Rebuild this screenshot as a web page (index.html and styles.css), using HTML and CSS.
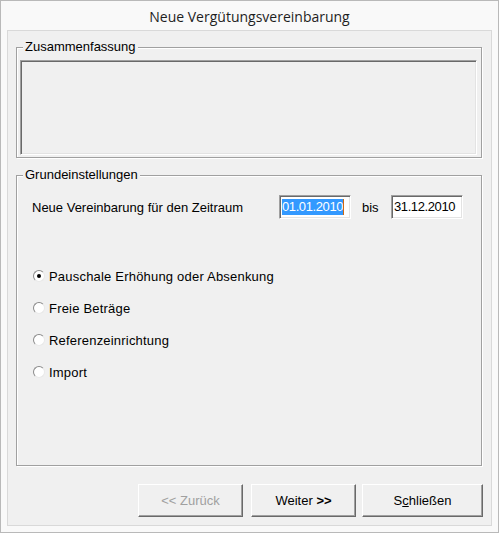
FILE: index.html
```html
<!DOCTYPE html>
<html lang="de">
<head>
<meta charset="utf-8">
<title>Neue Vergütungsvereinbarung</title>
<link rel="stylesheet" href="styles.css">
</head>
<body>
<div class="window">
  <div class="titlebar">Neue Vergütungsvereinbarung</div>
  <div class="panel">
    <div class="group group-summary">
      <span class="legend">Zusammenfassung</span>
      <div class="summary"></div>
    </div>
    <div class="group group-settings">
      <span class="legend">Grundeinstellungen</span>
      <div class="period">
        <span class="period-label">Neue Vereinbarung für den Zeitraum</span>
        <span class="field"><span class="sel">01.01.2010</span><span class="caret"></span></span>
        <span class="bis">bis</span>
        <span class="field">31.12.2010</span>
      </div>
      <div class="options">
        <div class="option"><span class="radio checked"></span><span>Pauschale Erhöhung oder Absenkung</span></div>
        <div class="option"><span class="radio"></span><span>Freie Beträge</span></div>
        <div class="option"><span class="radio"></span><span>Referenzeinrichtung</span></div>
        <div class="option"><span class="radio"></span><span>Import</span></div>
      </div>
    </div>
    <div class="buttons">
      <button class="btn btn-back" disabled>&lt;&lt; Zurück</button>
      <button class="btn btn-next">Weiter <b>&gt;&gt;</b></button>
      <button class="btn btn-close">S<u>c</u>hließen</button>
    </div>
  </div>
</div>
</body>
</html>
```
FILE: styles.css
```css
html, body {
  margin: 0;
  padding: 0;
  background: #ffffff;
}
body {
  width: 499px;
  height: 533px;
  font-family: "Liberation Sans", Arial, sans-serif;
  font-size: 13px;
  color: #000;
}
.window {
  box-sizing: border-box;
  width: 499px;
  height: 533px;
  border: 1px solid #b9b9b9;
  background: #f9f9f9;
  padding: 0 6px 6px 6px;
  display: flex;
  flex-direction: column;
}
.titlebar {
  height: 29px;
  line-height: 31px;
  text-align: center;
  font-family: "Open Sans", "Noto Sans", sans-serif;
  font-size: 14px;
  color: #1e1e1e;
}
.panel {
  flex: 1;
  border: 1px solid #d9d9d9;
  background: #f0f0f0;
  padding: 16px 8px 8px 8px;
  display: flex;
  flex-direction: column;
}
.group {
  position: relative;
  border: 1px solid #a0a0a0;
  box-shadow: inset 1px 1px 0 #ffffff, 1px 1px 0 #ffffff;
  margin-right: 1px;
  box-sizing: border-box;
}
.legend {
  position: absolute;
  top: -9px;
  left: 6px;
  padding: 0 2px;
  line-height: 16px;
  background: #f0f0f0;
}
.group-summary {
  height: 111px;
  padding: 12px 4px 2px 3px;
}
.summary {
  box-sizing: border-box;
  height: 95px;
  border: 1px solid;
  border-color: #a0a0a0 #ffffff #ffffff #a0a0a0;
  box-shadow: inset 1px 1px 0 #696969, inset -1px -1px 0 #e3e3e3;
}
.group-settings {
  margin-top: 17px;
  height: 291px;
  padding: 19px 0 0 15px;
}
.period {
  display: flex;
  align-items: center;
  height: 24px;
}
.period-label {
  width: 247px;
}
.field {
  box-sizing: border-box;
  width: 72px;
  height: 24px;
  background: #ffffff;
  border: 1px solid;
  border-color: #a0a0a0 #ffffff #ffffff #a0a0a0;
  box-shadow: inset 1px 1px 0 #696969, inset -1px -1px 0 #e3e3e3;
  padding: 3px 0 0 2px;
  font-size: 13px;
  letter-spacing: -0.4px;
  line-height: 16px;
  display: flex;
  align-items: flex-start;
}
.sel {
  background: #3399ff;
  color: #ffffff;
}
.caret {
  width: 1px;
  height: 16px;
  background: #d06a10;
}
.bis {
  width: 18px;
  margin: 0 11px 0 11px;
}
.options {
  margin-top: 41px;
  display: flex;
  flex-direction: column;
}
.option {
  height: 32px;
  display: flex;
  align-items: center;
  padding-left: 1px;
  letter-spacing: 0.2px;
}
.radio {
  box-sizing: border-box;
  width: 12px;
  height: 12px;
  border-radius: 50%;
  border: 1px solid;
  border-color: #8a8a8a #e8e8e8 #e8e8e8 #8a8a8a;
  background: #ffffff;
  margin-right: 4px;
  display: flex;
  align-items: center;
  justify-content: center;
}
.radio.checked::after {
  content: "";
  width: 4px;
  height: 4px;
  border-radius: 50%;
  background: #000;
}
.buttons {
  margin-top: 18px;
  display: flex;
  justify-content: flex-end;
}
.btn {
  box-sizing: border-box;
  height: 33px;
  width: 105px;
  background: #f0f0f0;
  border: 1px solid;
  border-color: #ffffff #696969 #696969 #ffffff;
  box-shadow: inset -1px -1px 0 #a0a0a0;
  font-family: "Liberation Sans", Arial, sans-serif;
  font-size: 13px;
  color: #000;
  padding: 0;
  margin: 0;
}
.btn b {
  font-weight: bold;
}
.btn-back {
  color: #a0a0a0;
  margin-right: 8px;
}
.btn-next {
  margin-right: 6px;
}
.btn-close {
  width: 121px;
}
```
